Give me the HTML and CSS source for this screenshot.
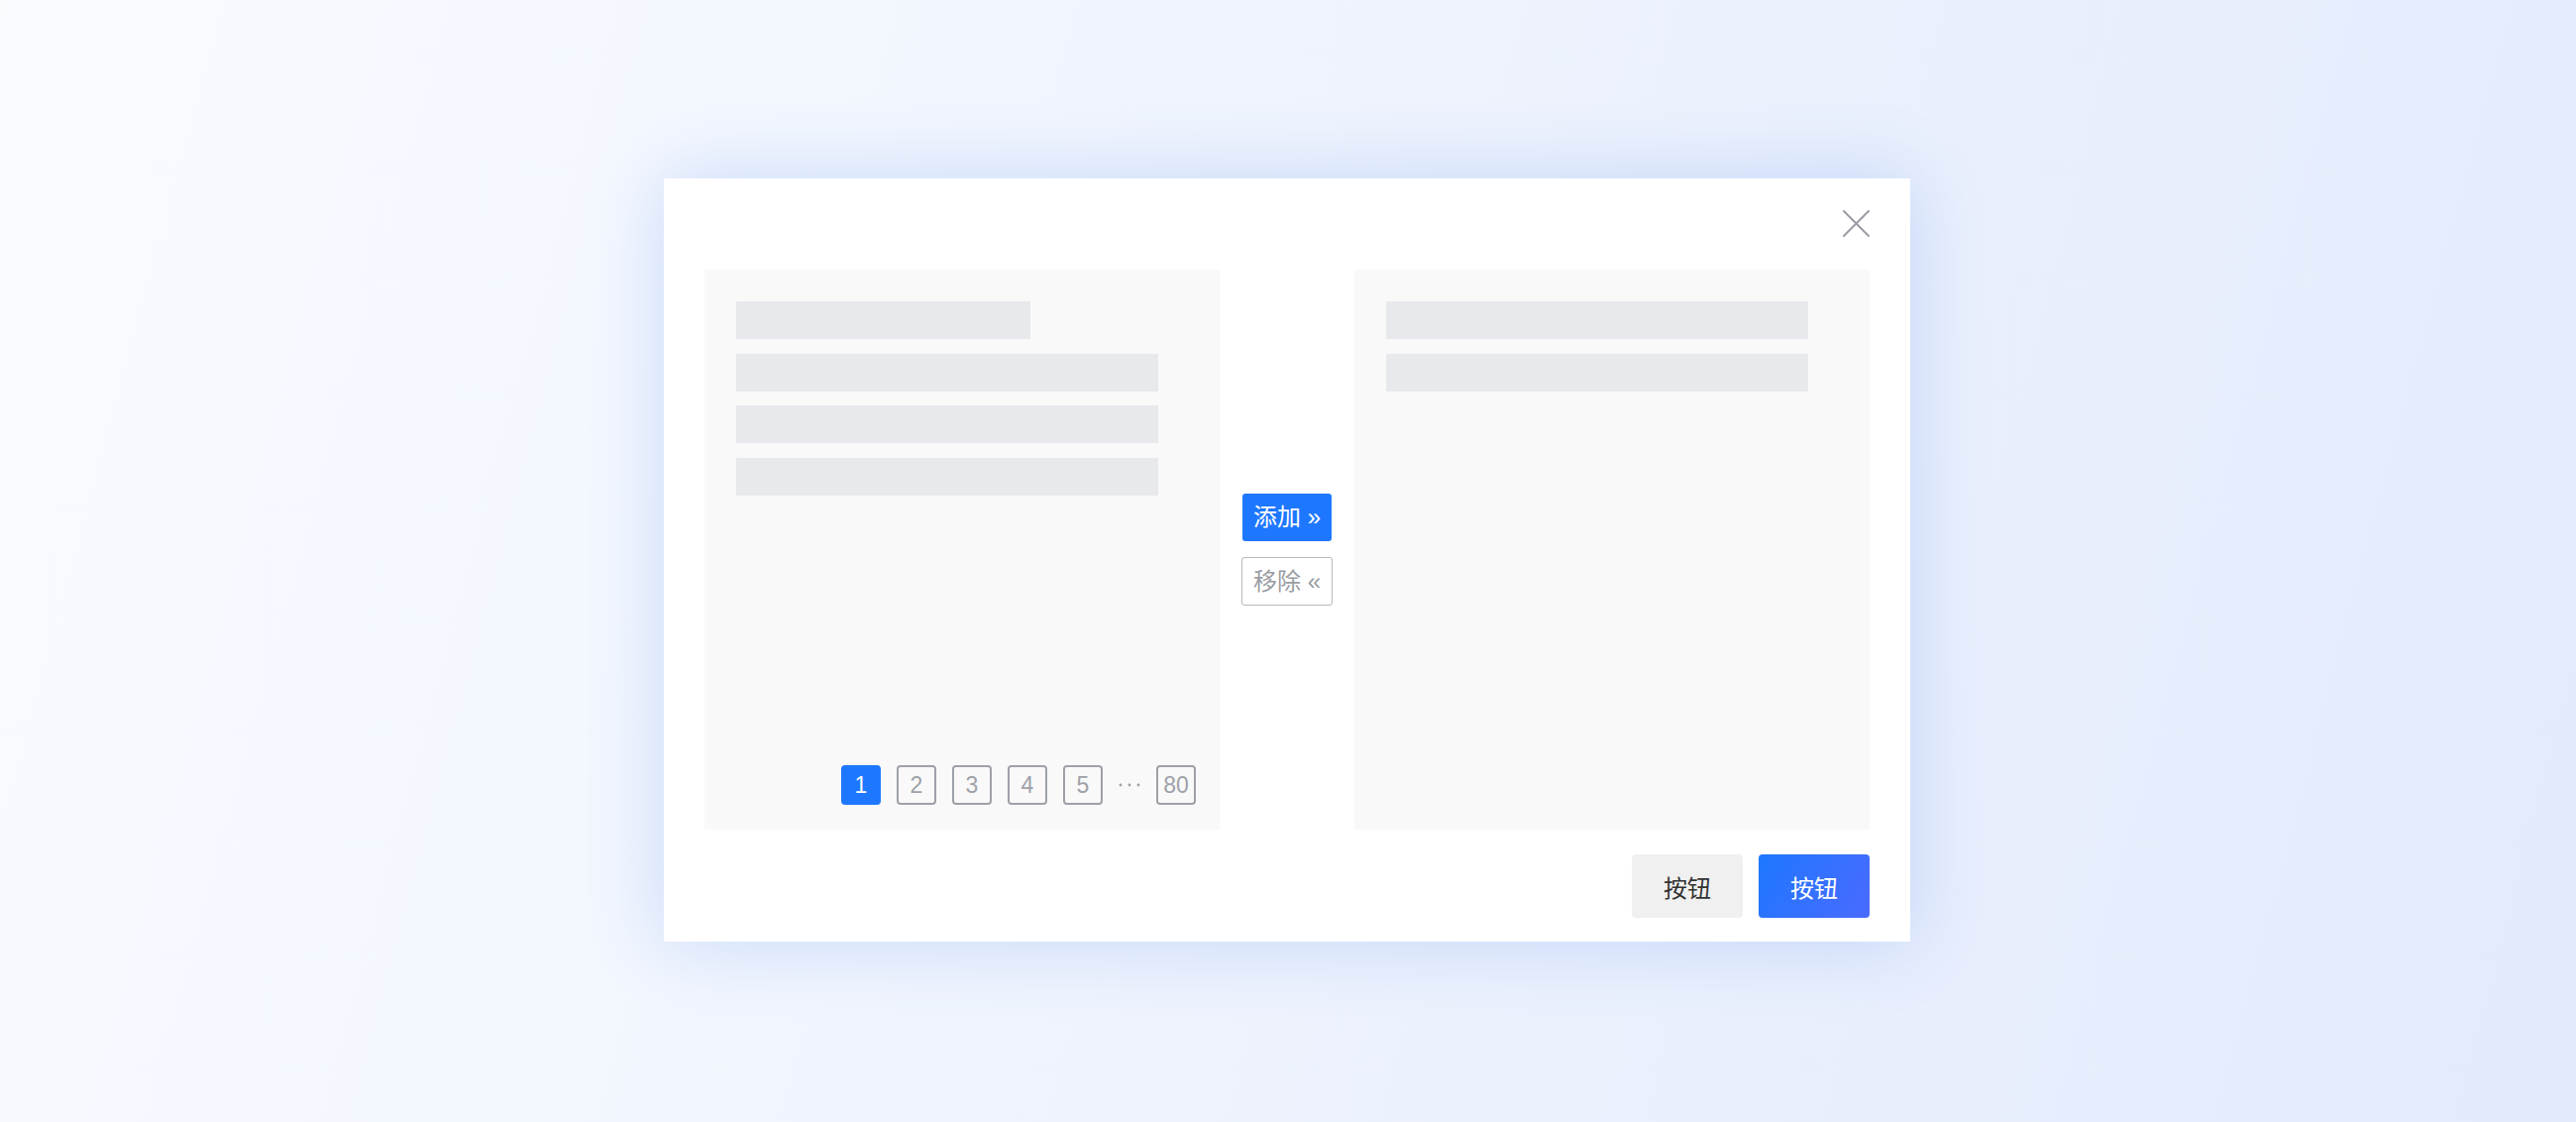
FILE: index.html
```html
<!DOCTYPE html>
<html lang="zh-CN">
<head>
  <meta charset="UTF-8">
  <title>穿梭框弹窗</title>
  <meta name="viewport" content="width=device-width, initial-scale=1.0">
  <link rel="stylesheet" href="styles.css">
</head>
<body>
  <div class="modal">
    <div class="modal-header">
      <button class="close-btn" aria-label="关闭">
        <svg width="27" height="27" viewBox="0 0 27 27">
          <path d="M1 1 L26 26 M26 1 L1 26" stroke="#9a9ca3" stroke-width="2" fill="none" stroke-linecap="round"/>
        </svg>
      </button>
    </div>

    <div class="transfer">
      <div class="panel">
        <div class="rows">
          <div class="row short"></div>
          <div class="row"></div>
          <div class="row"></div>
          <div class="row"></div>
        </div>
        <div class="pager">
          <span class="page active">1</span>
          <span class="page">2</span>
          <span class="page">3</span>
          <span class="page">4</span>
          <span class="page">5</span>
          <span class="dots">
            <svg width="22" height="4" viewBox="0 0 22 4">
              <circle cx="2" cy="2" r="1.4" fill="#9ea1a8"/>
              <circle cx="11" cy="2" r="1.4" fill="#9ea1a8"/>
              <circle cx="20" cy="2" r="1.4" fill="#9ea1a8"/>
            </svg>
          </span>
          <span class="page">80</span>
        </div>
      </div>

      <div class="actions">
        <button class="move-btn add">添加 »</button>
        <button class="move-btn remove">移除 «</button>
      </div>

      <div class="panel">
        <div class="rows">
          <div class="row"></div>
          <div class="row"></div>
        </div>
      </div>
    </div>

    <div class="modal-footer">
      <button class="btn btn-default">按钮</button>
      <button class="btn btn-primary">按钮</button>
    </div>
  </div>
</body>
</html>
```

FILE: styles.css
```css
* {
  box-sizing: border-box;
}
body {
  margin: 0;
  padding: 0 2px 2px 0;
  min-height: 100vh;
  display: flex;
  align-items: center;
  justify-content: center;
  font-family: "Liberation Sans", "Noto Sans CJK SC", sans-serif;
  background: linear-gradient(105deg, #f9fbff 0%, #eef3fd 50%, #e2eafc 100%);
}
button {
  font-family: inherit;
  cursor: pointer;
}
.modal {
  width: 1258px;
  height: 770px;
  padding: 0 41px;
  background: #fff;
  box-shadow: 0 0 70px rgba(70, 130, 240, 0.24);
}
.modal-header {
  height: 92px;
  padding-top: 32px;
  display: flex;
  justify-content: flex-end;
  align-items: flex-start;
}
.close-btn {
  width: 27px;
  height: 27px;
  padding: 0;
  border: none;
  background: none;
  display: block;
}
.close-btn svg {
  display: block;
}
.transfer {
  display: flex;
  height: 565px;
}
.panel {
  width: 520px;
  background: #f9f9f9;
  padding: 32px 24px 25px 32px;
  display: flex;
  flex-direction: column;
}
.rows {
  display: flex;
  flex-direction: column;
  gap: 14.5px;
}
.row {
  width: 426px;
  height: 38px;
  background: #e8e9ec;
}
.row.short {
  width: 297px;
}
.pager {
  margin-top: auto;
  align-self: flex-end;
  display: flex;
  align-items: center;
  gap: 16px;
}
.page {
  width: 40px;
  height: 40px;
  border: 2px solid #9ea1a8;
  border-radius: 4px;
  color: #9ea1a8;
  font-size: 23px;
  line-height: 1;
  display: flex;
  align-items: center;
  justify-content: center;
}
.page.active {
  background: #1e78ff;
  border-color: #1e78ff;
  color: #fff;
}
.dots {
  width: 22px;
  display: flex;
  align-items: center;
}
.dots svg {
  display: block;
}
.actions {
  width: 136px;
  display: flex;
  flex-direction: column;
  align-items: center;
  justify-content: center;
  gap: 16px;
}
.move-btn {
  height: 48px;
  padding: 0;
  font-size: 24px;
  line-height: 1;
  border-radius: 3px;
  display: flex;
  align-items: center;
  justify-content: center;
}
.move-btn.add {
  width: 90px;
  border: none;
  background: #1e78ff;
  color: #fff;
}
.move-btn.remove {
  width: 92px;
  height: 49px;
  border: 1px solid #b9b9b9;
  background: #fff;
  color: #9a9ca3;
}
.modal-footer {
  margin-top: 25px;
  display: flex;
  justify-content: flex-end;
  gap: 16px;
}
.btn {
  width: 112px;
  height: 64px;
  border: none;
  border-radius: 4px;
  font-size: 24px;
}
.btn-default {
  background: #f0f0f0;
  color: #333;
}
.btn-primary {
  background: linear-gradient(120deg, #1e78ff 0%, #4a6aff 100%);
  color: #fff;
}
```
